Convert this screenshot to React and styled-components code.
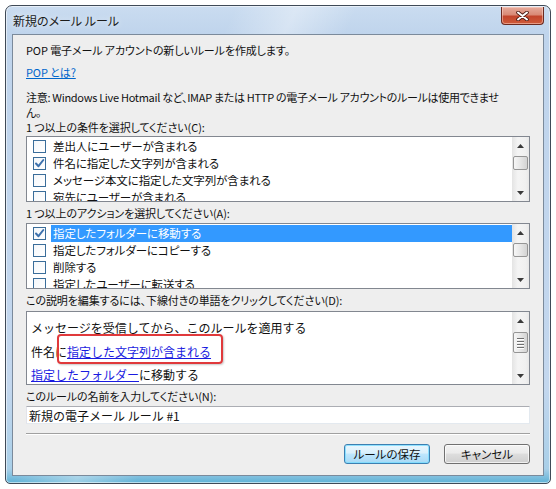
import React from "react";
import styled, { createGlobalStyle } from "styled-components";

const UI_FONT = `"Noto Sans CJK JP", "Noto Sans", sans-serif`;

const GlobalStyle = createGlobalStyle`
  html, body {
    margin: 0;
    padding: 0;
    background: #ffffff;
  }
  body {
    font-family: ${UI_FONT};
    font-size: 12px;
    color: #111;
  }
`;

const Stage = styled.div`
  padding: 5px 0 0 5px;
`;

const Window = styled.div`
  box-sizing: border-box;
  width: 546px;
  height: 479px;
  border: 1px solid #3f4a57;
  border-radius: 7px 7px 5px 5px;
  padding: 0 6px 7px 6px;
  display: flex;
  flex-direction: column;
  background:
    linear-gradient(115deg, rgba(255, 255, 255, 0) 30%, rgba(255, 255, 255, 0.35) 38%, rgba(255, 255, 255, 0) 46%),
    linear-gradient(to bottom, #cadcf0 0%, #bfd4ec 6%, #c3d7ee 80%, #a9cfe8 97%, #5eb2d6 100%);
  box-shadow: inset 0 0 0 1px rgba(255, 255, 255, 0.55);
`;

const TitleBar = styled.div`
  height: 28px;
  flex: none;
  display: flex;
  align-items: flex-start;
  justify-content: space-between;
`;

const Title = styled.div`
  margin: 7px 0 0 1px;
  font-size: 12px;
  line-height: 16px;
  color: #1b1b1b;
  font-feature-settings: "palt";
  text-shadow: 0 0 6px rgba(255, 255, 255, 0.9);
`;

const CloseButton = styled.div`
  margin-top: 1px;
  width: 43px;
  height: 18px;
  box-sizing: border-box;
  border: 1px solid #6b2a20;
  border-top: none;
  border-radius: 0 0 4px 4px;
  display: flex;
  align-items: center;
  justify-content: center;
  background: linear-gradient(to bottom, #e6ab9c 0%, #d98a76 45%, #c2452c 55%, #cf5b3a 100%);
  box-shadow: inset 0 0 0 1px rgba(255, 220, 210, 0.5);
`;

const Client = styled.div`
  flex: 1;
  box-sizing: border-box;
  border: 1px solid #7b8a9b;
  background: #eeeeee;
  padding: 8px 13px 0 13px;
  display: flex;
  flex-direction: column;
`;

const Text = styled.div`
  font-size: 11px;
  line-height: 15px;
  letter-spacing: ${(p) => p.$ls ?? -0.1}px;
  font-feature-settings: "palt";
  margin-top: ${(p) => p.$mt || 0}px;
  white-space: nowrap;
`;

const HelpLink = styled.a`
  color: #0066cc;
  text-decoration: underline;
  cursor: pointer;
`;

const ListBox = styled.div`
  margin-top: ${(p) => p.$mt || 0}px;
  height: ${(p) => p.$h || 66}px;
  box-sizing: border-box;
  border: 1px solid #828790;
  background: #ffffff;
  display: flex;
  position: relative;
  overflow: ${(p) => (p.$open ? "visible" : "hidden")};
`;

const ListItems = styled.div`
  flex: 1;
  min-width: 0;
  padding-top: 1px;
  overflow: hidden;
`;

const Row = styled.div`
  height: 17px;
  display: flex;
  align-items: center;
  padding-left: 6px;
`;

const Box = styled.div`
  width: 13px;
  height: 13px;
  box-sizing: border-box;
  flex: none;
  border: 1px solid #3a6d9a;
  background: linear-gradient(135deg, #f4f7fa, #ffffff);
  display: flex;
  align-items: center;
  justify-content: center;
`;

const RowLabel = styled.div`
  flex: 1;
  margin-left: 5px;
  padding: 0 2px;
  height: 17px;
  line-height: 17px;
  font-size: 11.5px;
  letter-spacing: -0.1px;
  font-feature-settings: "palt";
  white-space: nowrap;
  background: ${(p) => (p.$selected ? "#3399ff" : "transparent")};
  color: ${(p) => (p.$selected ? "#ffffff" : "#111")};
`;

const Track = styled.div`
  width: 17px;
  flex: none;
  display: flex;
  flex-direction: column;
  background: linear-gradient(to right, #e4e4e4, #f4f4f4 35%, #f0f0f0 80%, #e8e8e8);
`;

const ArrowButton = styled.div`
  height: 17px;
  flex: none;
  display: flex;
  align-items: center;
  justify-content: center;
`;

const Thumb = styled.div`
  margin: ${(p) => p.$gap}px 1px 0 1px;
  height: ${(p) => p.$h}px;
  box-sizing: border-box;
  border: 1px solid #959595;
  border-radius: 2px;
  background: linear-gradient(to right, #f6f6f6, #e6e6e6 50%, #d3d3d3);
  display: flex;
  flex-direction: column;
  align-items: center;
  justify-content: center;
  gap: 2px;
`;

const Grip = styled.div`
  width: 7px;
  height: 1px;
  background: #6f6f6f;
  box-shadow: 0 1px 0 #ffffff;
`;

const TrackFill = styled.div`
  flex: 1;
`;

const DescText = styled.div`
  flex: 1;
  min-width: 0;
  padding: 4px 0 0 4px;
  font-size: 12px;
  line-height: 23.5px;
  white-space: nowrap;
  overflow: hidden;
`;

const RuleLink = styled.a`
  color: #1a1ae0;
  text-decoration: underline;
  cursor: pointer;
`;

const Callout = styled.div`
  position: absolute;
  left: 30px;
  top: 22px;
  width: 166px;
  height: 30px;
  box-sizing: border-box;
  border: 2px solid #e0393b;
  border-radius: 4px;
  box-shadow: 1px 1px 2px rgba(0, 0, 0, 0.22);
  pointer-events: none;
`;

const NameInput = styled.input`
  margin-top: 2px;
  height: 18px;
  box-sizing: border-box;
  border: 1px solid;
  border-color: #abadb3 #e3e9ef #e3e9ef #e2e3ea;
  background: #ffffff;
  padding: 0 0 0 2px;
  font-family: ${UI_FONT};
  font-size: 12px;
  color: #111;
  outline: none;
`;

const Separator = styled.div`
  margin-top: 9px;
  height: 1px;
  background: #a0a0a0;
  box-shadow: 0 1px 0 #ffffff;
`;

const ButtonRow = styled.div`
  margin-top: 10px;
  display: flex;
  justify-content: flex-end;
  gap: 14px;
`;

const Button = styled.button`
  width: 86px;
  height: 20px;
  box-sizing: border-box;
  padding: 0;
  border: 1px solid ${(p) => (p.$default ? "#3c7fb1" : "#707070")};
  border-radius: 3px;
  font-family: ${UI_FONT};
  font-size: 11.5px;
  font-feature-settings: "palt";
  color: #111;
  background: ${(p) =>
    p.$default
      ? "linear-gradient(to bottom, #eaf6fd 0%, #d9f0fc 45%, #bee6fd 50%, #a7d9f5 100%)"
      : "linear-gradient(to bottom, #f2f2f2 0%, #ebebeb 45%, #dddddd 50%, #cfcfcf 100%)"};
  box-shadow: inset 0 0 0 1px ${(p) => (p.$default ? "rgba(120, 220, 255, 0.8)" : "rgba(255, 255, 255, 0.7)")};
`;

const Arrow = ({ up }) => (
  <svg width="7" height="4" viewBox="0 0 7 4">
    <polygon points={up ? "0,4 3.5,0 7,4" : "0,0 7,0 3.5,4"} fill="#3a3a3a" />
  </svg>
);

const ScrollBar = ({ thumb = 14, gap = 2, grip = false }) => (
  <Track>
    <ArrowButton>
      <Arrow up />
    </ArrowButton>
    <Thumb $h={thumb} $gap={gap}>
      {grip && (
        <>
          <Grip />
          <Grip />
          <Grip />
          <Grip />
        </>
      )}
    </Thumb>
    <TrackFill />
    <ArrowButton>
      <Arrow />
    </ArrowButton>
  </Track>
);

const Check = () => (
  <svg width="11" height="11" viewBox="0 0 11 11">
    <path d="M2 5.5 L4.5 8.2 L9.3 2" fill="none" stroke="#3e72ad" strokeWidth="2" strokeLinecap="round" strokeLinejoin="round" />
  </svg>
);

const CheckList = ({ items, mt }) => (
  <ListBox $mt={mt}>
    <ListItems>
      {items.map((it) => (
        <Row key={it.label}>
          <Box>{it.checked && <Check />}</Box>
          <RowLabel $selected={it.selected}>{it.label}</RowLabel>
        </Row>
      ))}
    </ListItems>
    <ScrollBar />
  </ListBox>
);

const conditions = [
  { label: "差出人にユーザーが含まれる" },
  { label: "件名に指定した文字列が含まれる", checked: true },
  { label: "メッセージ本文に指定した文字列が含まれる" },
  { label: "宛先にユーザーが含まれる" },
];

const actions = [
  { label: "指定したフォルダーに移動する", checked: true, selected: true },
  { label: "指定したフォルダーにコピーする" },
  { label: "削除する" },
  { label: "指定したユーザーに転送する" },
];

export default function App() {
  return (
    <>
      <GlobalStyle />
      <Stage>
        <Window>
          <TitleBar>
            <Title>新規のメール ルール</Title>
            <CloseButton>
              <svg width="13" height="10" viewBox="0 0 13 10">
                <path d="M2 1.5 L11 8.5 M11 1.5 L2 8.5" stroke="#4a1a12" strokeWidth="3.6" strokeLinecap="round" />
                <path d="M2 1.5 L11 8.5 M11 1.5 L2 8.5" stroke="#ffffff" strokeWidth="2" strokeLinecap="round" />
              </svg>
            </CloseButton>
          </TitleBar>
          <Client>
            <Text>POP 電子メール アカウントの新しいルールを作成します。</Text>
            <Text $mt={7}>
              <HelpLink>POP とは?</HelpLink>
            </Text>
            <Text $mt={10} $ls={-0.3}>
              注意: Windows Live Hotmail など、IMAP または HTTP の電子メール アカウントのルールは使用できませ
              <br />
              ん。
            </Text>
            <Text>1 つ以上の条件を選択してください(C):</Text>
            <CheckList items={conditions} mt={1} />
            <Text $mt={4}>1 つ以上のアクションを選択してください(A):</Text>
            <CheckList items={actions} mt={2} />
            <Text $mt={4}>この説明を編集するには、下線付きの単語をクリックしてください(D):</Text>
            <ListBox $mt={3} $h={74} $open>
              <DescText>
                <div>メッセージを受信してから、このルールを適用する</div>
                <div>
                  件名に<RuleLink>指定した文字列が含まれる</RuleLink>
                </div>
                <div>
                  <RuleLink>指定したフォルダー</RuleLink>に移動する
                </div>
              </DescText>
              <ScrollBar thumb={21} gap={3} grip />
              <Callout />
            </ListBox>
            <Text $mt={4}>このルールの名前を入力してください(N):</Text>
            <NameInput readOnly defaultValue="新規の電子メール ルール #1" />
            <Separator />
            <ButtonRow>
              <Button $default>ルールの保存</Button>
              <Button>キャンセル</Button>
            </ButtonRow>
          </Client>
        </Window>
      </Stage>
    </>
  );
}
